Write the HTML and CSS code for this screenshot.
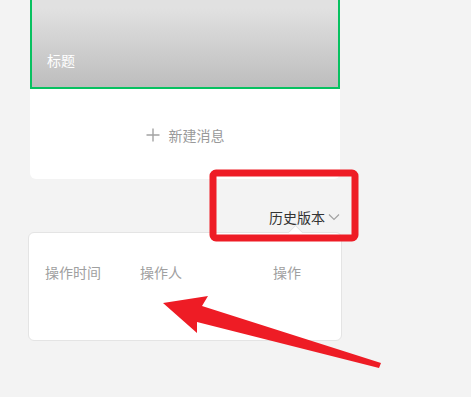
FILE: index.html
```html
<!DOCTYPE html>
<html lang="zh-CN">
<head>
    <meta charset="UTF-8">
    <meta name="viewport" content="width=device-width, initial-scale=1.0">
    <title>历史版本</title>
    <link rel="stylesheet" href="styles.css">
</head>
<body>

<div class="page">
    <div class="column">
        <!-- 消息卡片 -->
        <div class="msg-card">
            <div class="cover">
                <span class="cover-title">标题</span>
            </div>
            <div class="new-msg">
                <svg class="plus" width="14" height="14" viewBox="0 0 14 14">
                    <path d="M7 0.5 V13.5 M0.5 7 H13.5" stroke="#a3a3a3" stroke-width="1.4"/>
                </svg>
                <span>新建消息</span>
            </div>
        </div>

        <!-- 历史版本 -->
        <div class="history-bar">
            <span class="history-toggle">
                历史版本
                <svg class="chevron" width="12" height="8" viewBox="0 0 12 8">
                    <path d="M1 1.5 L6 6.5 L11 1.5" fill="none" stroke="#a3a3a3" stroke-width="1.2"/>
                </svg>
            </span>
        </div>

        <div class="history-pop">
            <div class="history-head">
                <span>操作时间</span>
                <span>操作人</span>
                <span>操作</span>
            </div>
        </div>
    </div>

    <!-- 标注 -->
    <svg class="annotation" width="471" height="397" viewBox="0 0 471 397">
        <rect x="213" y="173" width="142" height="65" rx="3" fill="none" stroke="#ee1c25" stroke-width="7"/>
        <polygon points="163,303 208,296 202,306 381,363 379,368 197,322 197,333" fill="#ee1c25"/>
    </svg>
</div>

</body>
</html>
```

FILE: styles.css
```css
body {
    margin: 0;
    background-color: #f3f3f3;
    font-family: "Noto Sans CJK SC", "Microsoft YaHei", sans-serif;
}
.page {
    position: relative;
    width: 471px;
    height: 397px;
    overflow: hidden;
}
.column {
    width: 314px;
    margin-left: 28px;
}

/* 消息卡片 */
.msg-card {
    margin: -20px 2px 0;
    background-color: #fff;
    border-radius: 0 0 6px 6px;
}
.cover {
    box-sizing: border-box;
    height: 109px;
    border: 2px solid #07c160;
    background: linear-gradient(#e1e1e1 25%, #bdbdbd);
    display: flex;
    align-items: flex-end;
    padding: 0 15px 17px;
}
.cover-title {
    color: #fff;
    font-size: 14px;
    line-height: 20px;
}
.new-msg {
    height: 90px;
    display: flex;
    align-items: center;
    justify-content: center;
    gap: 9px;
    color: #999;
    font-size: 14px;
    line-height: 20px;
    padding-top: 2px;
    box-sizing: border-box;
}

/* 历史版本 */
.history-bar {
    height: 53px;
    box-sizing: border-box;
    padding: 22px 2px 0 0;
    display: flex;
    justify-content: flex-end;
}
.history-toggle {
    display: flex;
    align-items: center;
    gap: 3px;
    color: #333;
    font-size: 14px;
    line-height: 20px;
}
.chevron {
    margin-top: 1px;
}
.history-pop {
    position: relative;
    height: 109px;
    box-sizing: border-box;
    background-color: #fff;
    border: 1px solid #e4e4e4;
    border-radius: 6px;
    padding: 29px 0 0 16px;
}
.history-pop::before {
    content: "";
    position: absolute;
    top: -6px;
    left: 261px;
    width: 10px;
    height: 10px;
    background-color: #fff;
    border-top: 1px solid #e4e4e4;
    border-left: 1px solid #e4e4e4;
    transform: rotate(45deg);
}
.history-head {
    display: grid;
    grid-template-columns: 95px 133px auto;
    color: #a0a0a0;
    font-size: 14px;
    line-height: 20px;
}

/* 标注层 */
.annotation {
    position: absolute;
    top: 0;
    left: 0;
    pointer-events: none;
}
```
